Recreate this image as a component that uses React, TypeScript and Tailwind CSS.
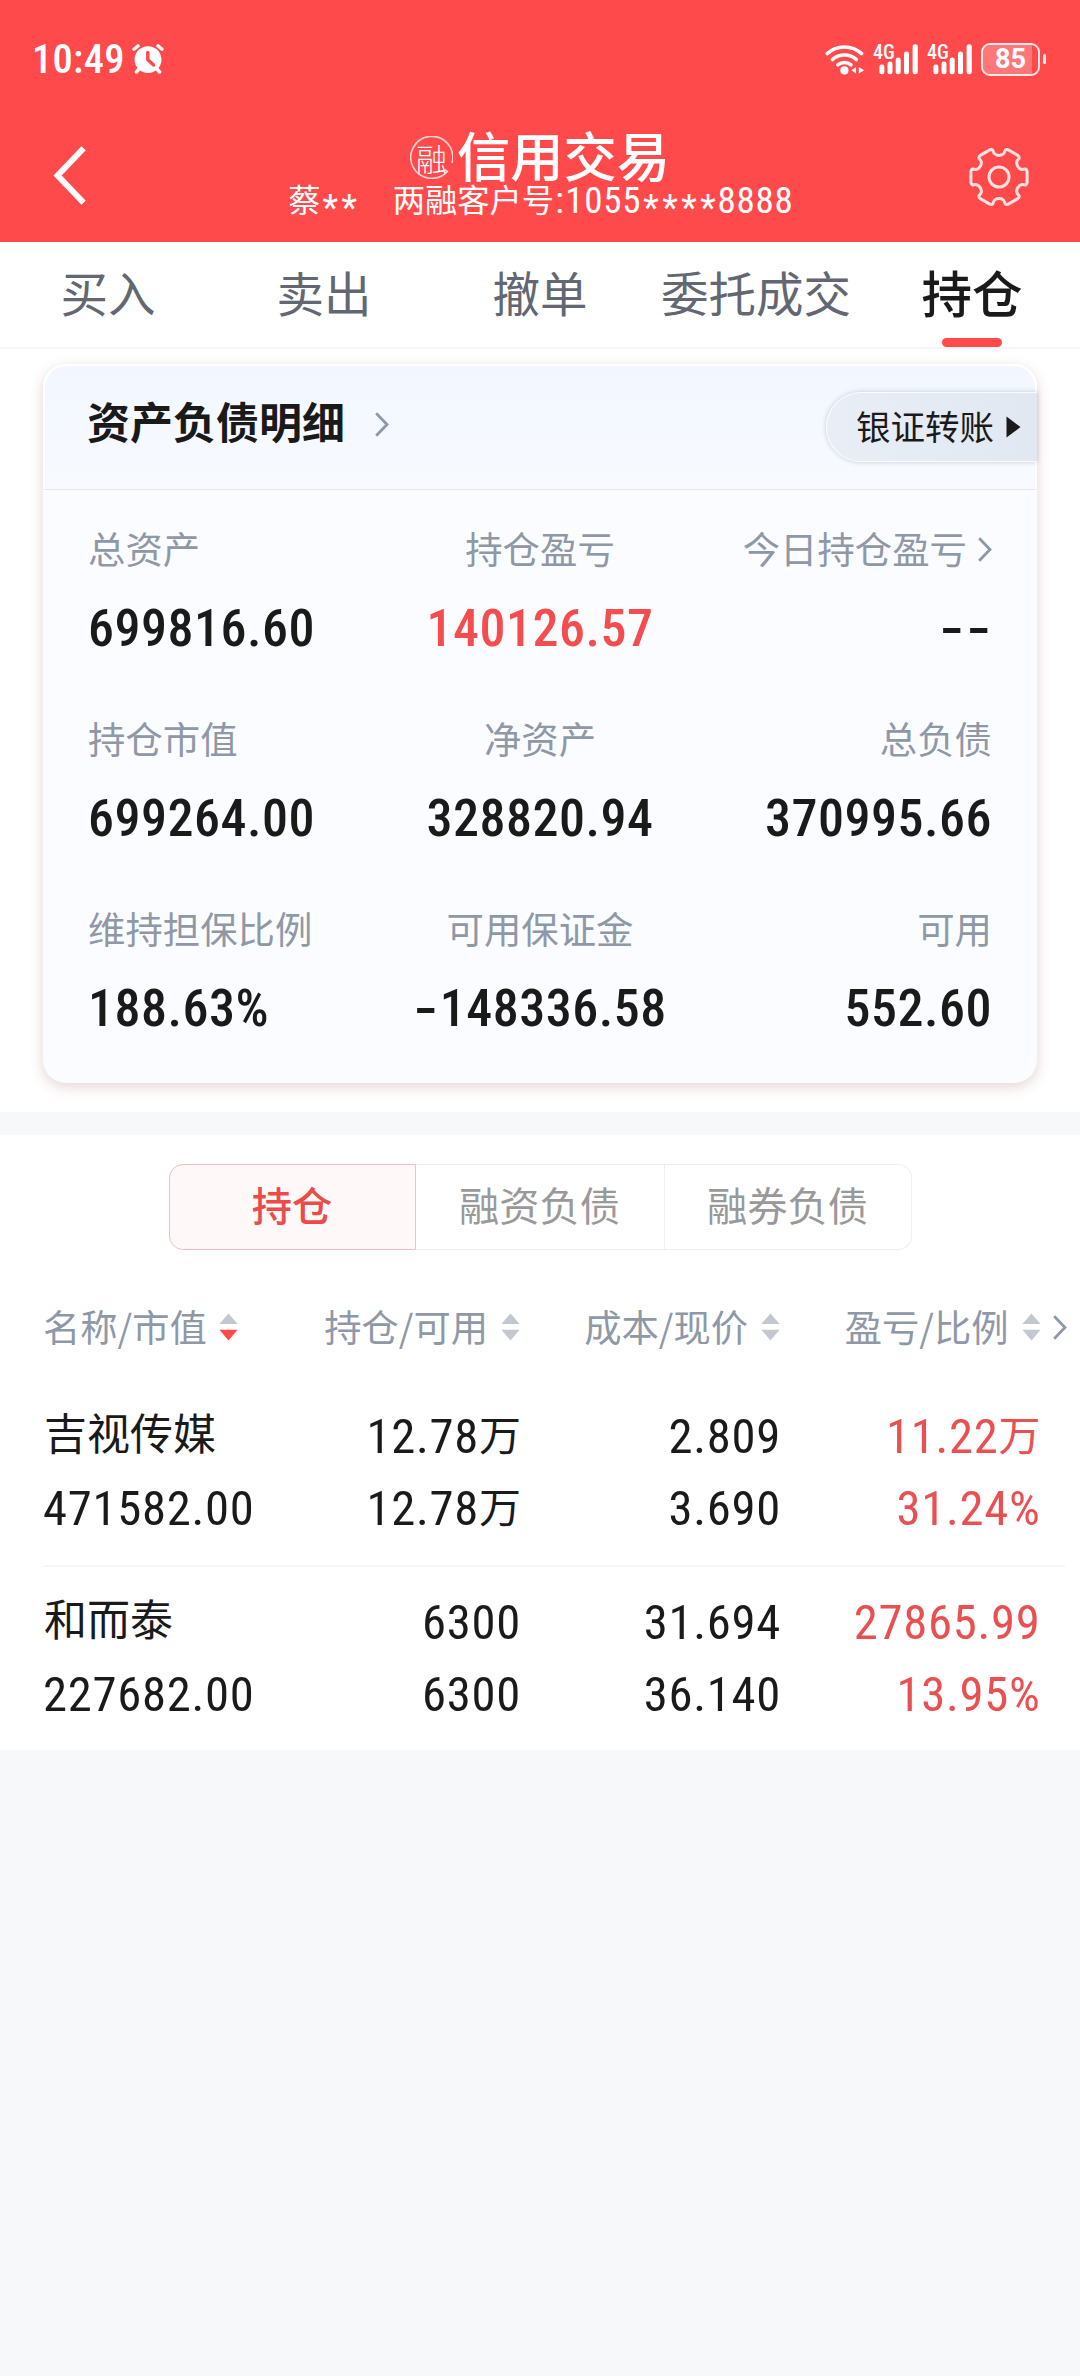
import React from "react";

const DIN = "font-['Roboto','Noto_Sans_CJK_SC',sans-serif] [font-stretch:75%]";

/* ---------- icons ---------- */

function AlarmIcon() {
  return (
    <svg width="32" height="30" viewBox="0 0 32 30" fill="none">
      <g stroke="white" strokeWidth="3.4" strokeLinecap="round">
        <path d="M2 5.2 6 1.9M30 5.2 26 1.9M7.5 24.5 4.4 28M24.5 24.5 27.6 28" />
      </g>
      <circle cx="16" cy="15.6" r="13.4" fill="white" />
      <path d="M15.8 8.4v7.4l5.8 5.2" stroke="#ff4a4c" strokeWidth="3.4" strokeLinecap="round" strokeLinejoin="round" />
    </svg>
  );
}

function WifiIcon() {
  return (
    <svg width="40" height="31" viewBox="0 0 40 31" fill="none">
      <g stroke="white" strokeWidth="3.5" strokeLinecap="round">
        <path d="M2.2 9.6a25.5 25.5 0 0 1 34.4 0" />
        <path d="M7.4 15.6a18 18 0 0 1 24 0" />
        <path d="M12.8 20.8a10.4 10.4 0 0 1 13.2 0" />
      </g>
      <circle cx="19.4" cy="26.4" r="4.1" fill="white" />
      <path d="M31 23v6.6l-4.8-3.3zM33.8 23v6.6l5.4-3.3z" fill="white" />
    </svg>
  );
}

function SignalIcon() {
  return (
    <div className="relative h-[31px] w-[46px]">
      <span className="absolute -top-[3px] left-0 font-['Roboto'] text-[20px] leading-[22px] font-medium [font-stretch:75%]">
        4G
      </span>
      <svg width="46" height="31" viewBox="0 0 46 31" fill="white">
        <rect x="6.4" y="20.6" width="5" height="9.6" rx="2.3" />
        <rect x="14.5" y="17.6" width="5" height="12.6" rx="2.3" />
        <rect x="22.7" y="13.6" width="5" height="16.6" rx="2.3" />
        <rect x="31" y="7.4" width="5" height="22.8" rx="2.3" />
        <rect x="39.6" y="0.2" width="5.2" height="30" rx="2.3" />
      </svg>
    </div>
  );
}

function Battery() {
  return (
    <div className="flex items-center gap-[2.5px]">
      <div className="relative flex h-[33px] w-[59px] items-center justify-center overflow-hidden rounded-[9px] border-[2.5px] border-[#ffeaea]">
        <div className="absolute inset-y-0 left-0 w-[49px] bg-white/25" />
        <span className="relative font-['Roboto'] text-[27px] leading-none font-bold">85</span>
      </div>
      <div className="h-[10px] w-[3.5px] rounded-full bg-[#ffeaea]" />
    </div>
  );
}

/* Six-lobed outline: a flat tooth every 60 degrees, joined by smooth valleys. */
function gearPath(cx: number, cy: number) {
  const at = (deg: number, radial: number, lateral: number) => {
    const a = (deg * Math.PI) / 180;
    const x = cx + radial * Math.cos(a) - lateral * Math.sin(a);
    const y = cy + radial * Math.sin(a) + lateral * Math.cos(a);
    return `${x.toFixed(2)} ${y.toFixed(2)}`;
  };
  let d = `M${at(0, 26.4, -8)}`;
  for (let k = 0; k < 6; k++) {
    const t = k * 60;
    d += `Q${at(t, 27.8, -7.4)} ${at(t, 28.1, -5.5)}L${at(t, 28.1, 5.5)}Q${at(t, 27.8, 7.4)} ${at(t, 26.4, 8)}`;
    d += `C${at(t + 30, 24.2, -5.4)} ${at(t + 30, 21.6, -4.6)} ${at(t + 30, 21.6, 0)}`;
    d += `C${at(t + 30, 21.6, 4.6)} ${at(t + 30, 24.2, 5.4)} ${at(t + 60, 26.4, -8)}`;
  }
  return d + "Z";
}

function GearIcon() {
  return (
    <svg width="64" height="64" viewBox="0 0 64 64" fill="none" stroke="#ffe3e3" strokeWidth="3" strokeLinejoin="round">
      <path d={gearPath(32, 32)} />
      <circle cx="32" cy="32" r="10" />
    </svg>
  );
}

function Chevron() {
  return (
    <svg width="14" height="25" viewBox="0 0 14 25" fill="none" stroke="#8f98a6" strokeWidth="2.8">
      <path d="M1.2 1.2 12 12.5 1.2 23.8" />
    </svg>
  );
}

function SortIcon({ active = false }: { active?: boolean }) {
  return (
    <svg className="mt-[2px]" width="19" height="28" viewBox="0 0 19 28">
      <path d="M9.5 0.5 18.6 11H0.4z" fill="#c3c7cf" />
      <path d="M9.5 27.5 18.6 16.8H0.4z" fill={active ? "#ff4a4c" : "#c3c7cf"} />
    </svg>
  );
}

/* ---------- text helpers ---------- */

function Star() {
  return <span className="relative top-[7px] inline-block w-[19px] text-center text-[36px]">*</span>;
}

function Dash() {
  return <span className="inline-block w-[26.5px] origin-center scale-x-[1.5] text-center">-</span>;
}

/* Amount string with figure-width minus signs. */
function Amount({ value }: { value: string }) {
  return (
    <>
      {value.split(/(-)/).map((part, i) => (part === "-" ? <Dash key={i} /> : <span key={i}>{part}</span>))}
    </>
  );
}

/* ---------- sections ---------- */

function Header() {
  return (
    <header className="h-[242px] bg-[#ff4a4c] text-white">
      <div className="flex h-[118px] items-center justify-between pr-[34px] pl-[32px]">
        <div className="flex items-center gap-[7px]">
          <span className={"text-[40.5px] leading-none font-medium tracking-[0.3px] " + DIN}>10:49</span>
          <AlarmIcon />
        </div>
        <div className="flex items-center">
          <WifiIcon />
          <div className="ml-[8px] flex gap-[8px]">
            <SignalIcon />
            <SignalIcon />
          </div>
          <div className="ml-[8px]">
            <Battery />
          </div>
        </div>
      </div>
      <div className="flex h-[124px] items-start justify-between pr-[49px] pl-[53px]">
        <svg className="mt-[28px]" width="33" height="59" viewBox="0 0 33 59" fill="none" stroke="white" strokeWidth="6">
          <path d="M30.6 2.2 4.6 29.5 30.6 56.8" />
        </svg>
        <div className="flex flex-col items-center pl-[29px]">
          <div className="flex h-[67px] items-center gap-[4px] pt-[8px] pr-[2px]">
            <span className="relative mt-[4px] flex h-[43px] w-[43px] items-center justify-center text-[31px] leading-none font-light">
              <svg className="absolute inset-0" width="43" height="43" viewBox="0 0 43 43" fill="none" stroke="#ffd5d5" strokeWidth="1.6">
                <path d="M42 27A21 21 0 1 0 37.4 35.4L34.6 33.4" />
              </svg>
              融
            </span>
            <span className="-mt-[4px] text-[53.3px] leading-[54px] font-medium">信用交易</span>
          </div>
          <div className={"flex h-[32px] items-center text-[37px] leading-[32px] " + DIN}>
            <span className="text-[32.3px]">蔡</span>
            <Star />
            <Star />
            <span className="ml-[34px] text-[32.3px]">两融客户号</span>
            <span className="w-[11px] text-center">:</span>
            <span className="tracking-[0.8px]">1055</span>
            <Star />
            <Star />
            <Star />
            <Star />
            <span className="tracking-[0.8px]">8888</span>
          </div>
        </div>
        <div className="mt-[27px]">
          <GearIcon />
        </div>
      </div>
    </header>
  );
}

const TABS = ["买入", "卖出", "撤单", "委托成交", "持仓"];

function Tabs() {
  return (
    <nav className="grid h-[107px] grid-cols-5 border-b-2 border-[#f6f6f8] bg-white">
      {TABS.map((tab) =>
        tab === "持仓" ? (
          <div key={tab} className="flex flex-col items-center">
            <span className="h-[96px] text-[50.5px] leading-[99px] font-medium text-[#1a1a1a]">{tab}</span>
            <span className="h-[9px] w-[60px] rounded-full bg-[#ff4a4c]" />
          </div>
        ) : (
          <span key={tab} className="text-center text-[47.5px] leading-[99px] text-[#626772]">
            {tab}
          </span>
        )
      )}
    </nav>
  );
}

type Metric = { label: string; value: string; red?: boolean; link?: boolean };

const METRICS: Metric[][] = [
  [
    { label: "总资产", value: "699816.60" },
    { label: "持仓盈亏", value: "140126.57", red: true },
    { label: "今日持仓盈亏", value: "--", link: true },
  ],
  [
    { label: "持仓市值", value: "699264.00" },
    { label: "净资产", value: "328820.94" },
    { label: "总负债", value: "370995.66" },
  ],
  [
    { label: "维持担保比例", value: "188.63%" },
    { label: "可用保证金", value: "-148336.58" },
    { label: "可用", value: "552.60" },
  ],
];

const ALIGN = ["items-start", "items-center", "items-end"];

function AssetCard() {
  return (
    <section className="mx-[43px] mt-[15px] h-[719px] rounded-[23px] bg-[#fbfcff] shadow-[0_4px_14px_rgba(120,50,40,0.2)]">
      <div className="flex h-[126px] items-start justify-between rounded-t-[23px] border-2 border-b-[1.5px] border-white border-b-[#e3e8ef] bg-gradient-to-b from-[#f2f7ff] to-[#f8faff] pl-[42px]">
        <div className="flex h-[107px] items-center gap-[30px]">
          <h2 className="text-[43px] leading-[60px] font-bold text-[#1a1a1a]">资产负债明细</h2>
          <span className="mt-[10px]">
            <Chevron />
          </span>
        </div>
        <div className="mt-[26px] -mr-[2px] flex h-[70px] w-[211px] items-center gap-[12px] rounded-l-full border-[1.5px] border-r-0 border-white/80 bg-gradient-to-r from-[#e9eef6] to-[#e1e8f2] pl-[29px] shadow-[0_0_5px_rgba(80,90,110,0.3)]">
          <span className="-mt-[3px] text-[34.5px] leading-none text-[#1a1a1a]">银证转账</span>
          <svg width="15" height="22" viewBox="0 0 15 22">
            <path d="M0.5 0.5 14.5 11 0.5 21.5z" fill="#1a1a1a" />
          </svg>
        </div>
      </div>
      <div className="flex flex-col gap-[28px] px-[45px] pt-[18.5px]">
        {METRICS.map((row, r) => (
          <div key={r} className="grid grid-cols-3">
            {row.map((m, c) => (
              <div key={m.label} className={"flex flex-col " + ALIGN[c]}>
                <div className="flex items-center gap-[11px] text-[37.4px] leading-[78px] whitespace-nowrap text-[#8f98a6]">
                  {m.label}
                  {m.link && (
                    <span className="mt-[3px]">
                      <Chevron />
                    </span>
                  )}
                </div>
                <div
                  className={
                    "text-[52px] leading-[84px] font-[480] tracking-[0.5px] whitespace-nowrap " +
                    DIN +
                    (m.red ? " text-[#f34d50]" : " text-[#1a1a1a]")
                  }
                >
                  <Amount value={m.value} />
                </div>
              </div>
            ))}
          </div>
        ))}
      </div>
    </section>
  );
}

function Segments() {
  return (
    <div className="mx-auto flex h-[86px] w-[743px] text-[40.3px] leading-[78px]">
      <div className="w-[247px] rounded-l-[14px] border-[1.5px] border-[#f3bfc1] bg-[#fff8f8] text-center font-medium text-[#e94c49]">
        持仓
      </div>
      <div className="w-[249px] border-y-[1.5px] border-r-[1.5px] border-[#edf0f3] text-center text-[#999999]">
        融资负债
      </div>
      <div className="w-[247px] rounded-r-[14px] border-y-[1.5px] border-r-[1.5px] border-[#edf0f3] text-center text-[#999999]">
        融券负债
      </div>
    </div>
  );
}

const HOLDINGS = [
  {
    name: "吉视传媒",
    market: "471582.00",
    cells: [
      ["12.78万", "12.78万"],
      ["2.809", "3.690"],
      ["11.22万", "31.24%"],
    ],
  },
  {
    name: "和而泰",
    market: "227682.00",
    cells: [
      ["6300", "6300"],
      ["31.694", "36.140"],
      ["27865.99", "13.95%"],
    ],
  },
];

const COLS = "grid grid-cols-[217px_260px_260px_259.5px]";

/* Figures in the condensed face, with the 万 unit at the smaller CJK size. */
function Figure({ value }: { value: string }) {
  const unit = value.endsWith("万");
  return (
    <div className="h-[72px]">
      {unit ? value.slice(0, -1) : value}
      {unit && <span className="relative -top-[2px] text-[42px] tracking-normal">万</span>}
    </div>
  );
}

function HoldingsTable() {
  return (
    <div className="pl-[43px]">
      <div className={"h-[117px] items-center pt-[6px] text-[37.3px] leading-[60px] whitespace-nowrap text-[#8f98a6] " + COLS}>
        <div className="flex items-center gap-[12px]">
          名称/市值
          <SortIcon active />
        </div>
        <div className="flex items-center justify-end gap-[13px]">
          持仓/可用
          <SortIcon />
        </div>
        <div className="flex items-center justify-end gap-[13px]">
          成本/现价
          <SortIcon />
        </div>
        <div className="-mr-[27px] flex items-center justify-end gap-[13px]">
          盈亏/比例
          <SortIcon />
          <span className="mt-[3px] -ml-[1px]">
            <Chevron />
          </span>
        </div>
      </div>
      {HOLDINGS.map((h, r) => (
        <div
          key={h.name}
          className={
            "mr-[15px] h-[186px] pt-[20px] text-[48.7px] leading-[72px] font-[430] tracking-[0.7px] text-[#1a1a1a] " +
            DIN +
            " " +
            COLS +
            (r === 0 ? " border-b-2 border-[#f5f6f9]" : "")
          }
        >
          <div className="whitespace-nowrap">
            <div className="h-[72px] pl-[1px] text-[43px] leading-[68px] tracking-normal">{h.name}</div>
            <div>{h.market}</div>
          </div>
          {h.cells.map((pair, c) => (
            <div key={c} className={"-mr-[1px] text-right " + (c === 2 ? "text-[#ea5052]" : "")}>
              <Figure value={pair[0]} />
              <Figure value={pair[1]} />
            </div>
          ))}
        </div>
      ))}
    </div>
  );
}

export default function App() {
  return (
    <div className="h-[2376px] w-[1080px] overflow-hidden bg-[#f6f8fa] font-['Noto_Sans_CJK_SC',sans-serif]">
      <Header />
      <Tabs />
      <div className="flex h-[763px] flex-col bg-white">
        <AssetCard />
      </div>
      <div className="mt-[23px] h-[615px] bg-white pt-[29px]">
        <Segments />
        <div className="mt-[14px]">
          <HoldingsTable />
        </div>
      </div>
    </div>
  );
}
